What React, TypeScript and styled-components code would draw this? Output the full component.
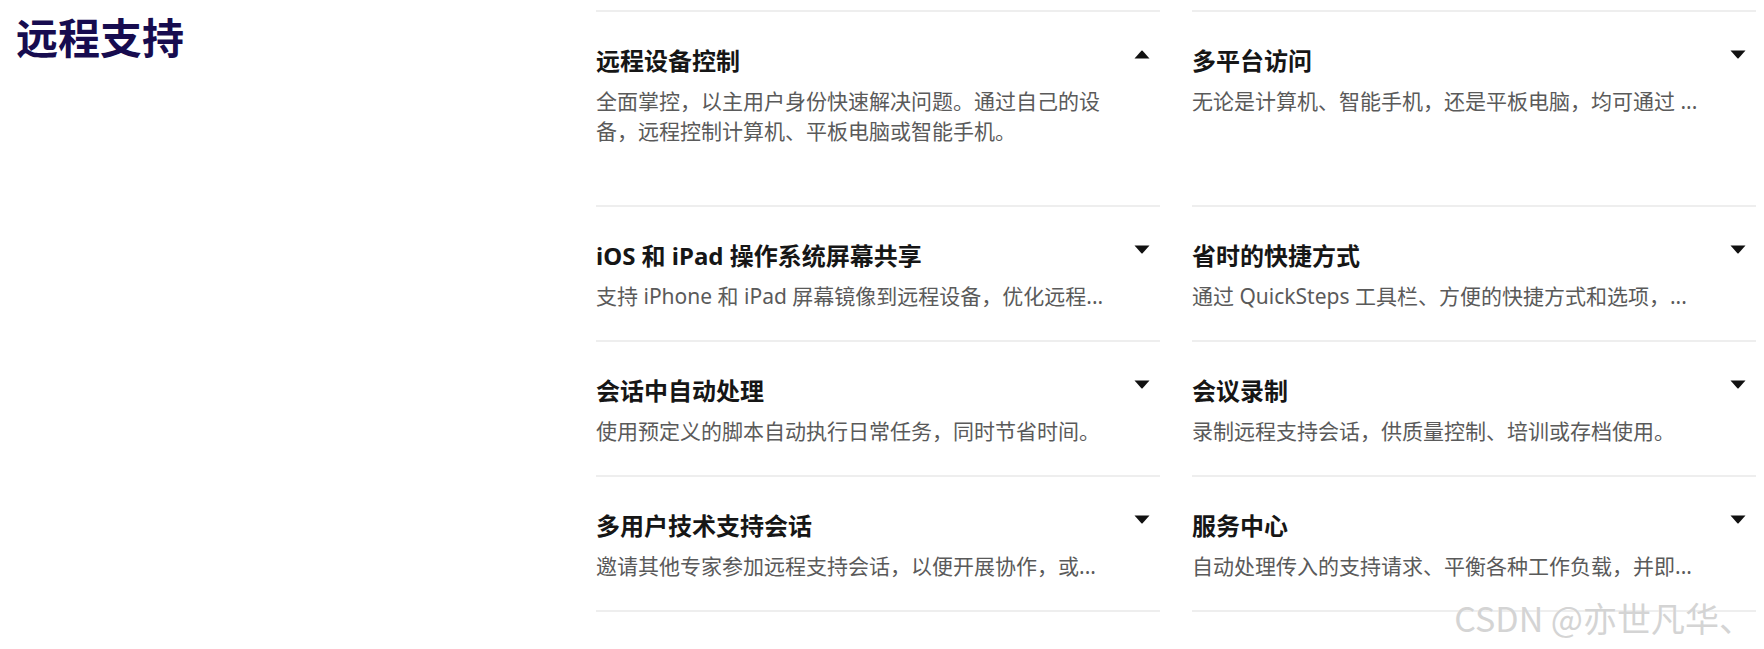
import React from 'react';
import styled, { createGlobalStyle } from 'styled-components';

const GlobalStyle = createGlobalStyle`
  body {
    margin: 0;
    background: #ffffff;
    font-family: 'Noto Sans', 'Noto Sans CJK SC', sans-serif;
  }
`;

type Feature = {
  title: string;
  desc: string;
  open?: boolean;
};

const features: Feature[] = [
  {
    title: '远程设备控制',
    desc: '全面掌控，以主用户身份快速解决问题。通过自己的设备，远程控制计算机、平板电脑或智能手机。',
    open: true,
  },
  { title: '多平台访问', desc: '无论是计算机、智能手机，还是平板电脑，均可通过 ...' },
  { title: 'iOS 和 iPad 操作系统屏幕共享', desc: '支持 iPhone 和 iPad 屏幕镜像到远程设备，优化远程...' },
  { title: '省时的快捷方式', desc: '通过 QuickSteps 工具栏、方便的快捷方式和选项，...' },
  { title: '会话中自动处理', desc: '使用预定义的脚本自动执行日常任务，同时节省时间。' },
  { title: '会议录制', desc: '录制远程支持会话，供质量控制、培训或存档使用。' },
  { title: '多用户技术支持会话', desc: '邀请其他专家参加远程支持会话，以便开展协作，或...' },
  { title: '服务中心', desc: '自动处理传入的支持请求、平衡各种工作负载，并即...' },
];

const Caret: React.FC<{ up?: boolean }> = ({ up }) => (
  <CaretIcon width="16" height="9" viewBox="0 0 16 9" $up={up}>
    <path d="M0.5 0.5 H15.5 L8.6 8.3 Q8 8.9 7.4 8.3 Z" fill="#111111" />
  </CaretIcon>
);

const FeatureItem: React.FC<{ item: Feature }> = ({ item }) => (
  <Item $open={item.open}>
    <ItemHeader>
      <ItemTitle>{item.title}</ItemTitle>
      <Caret up={item.open} />
    </ItemHeader>
    <ItemDesc>{item.desc}</ItemDesc>
  </Item>
);

const App: React.FC = () => {
  return (
    <>
      <GlobalStyle />
      <Page>
        <Aside>
          <Heading>远程支持</Heading>
        </Aside>
        <FeatureGrid>
          {features.map((item) => (
            <FeatureItem key={item.title} item={item} />
          ))}
        </FeatureGrid>
        <Watermark>CSDN @亦世凡华、</Watermark>
      </Page>
    </>
  );
};

const Page = styled.div`
  position: relative;
  min-height: 100vh;
  display: flex;
  align-items: flex-start;
  padding: 0 0 0 16px;
  box-sizing: border-box;
`;

const Aside = styled.div`
  width: 580px;
  flex-shrink: 0;
  padding-top: 12px;
`;

const Heading = styled.h2`
  margin: 0;
  font-size: 42px;
  line-height: 52px;
  font-weight: 700;
  color: #170c4f;
`;

const FeatureGrid = styled.div`
  display: grid;
  grid-template-columns: 564px 564px;
  column-gap: 32px;
  margin-top: 10px;
`;

const Item = styled.div<{ $open?: boolean }>`
  border-top: 2px solid #eeeeee;
  padding: 33px 0 ${(p) => (p.$open ? 59 : 29)}px;
  &:nth-last-child(-n + 2) {
    border-bottom: 2px solid #eeeeee;
  }
`;

const ItemHeader = styled.div`
  display: flex;
  justify-content: space-between;
  align-items: flex-start;
`;

const ItemTitle = styled.div`
  font-size: 24px;
  line-height: 32px;
  font-weight: 700;
  color: #161616;
`;

const CaretIcon = styled.svg<{ $up?: boolean }>`
  flex-shrink: 0;
  margin: 5px 10px 0 0;
  transform: ${(p) => (p.$up ? 'rotate(180deg)' : 'none')};
`;

const ItemDesc = styled.div`
  margin-top: 9px;
  padding-right: 48px;
  font-size: 21px;
  line-height: 30px;
  color: #5a5a5a;
`;

const Watermark = styled.div`
  position: absolute;
  right: 11px;
  bottom: 10px;
  font-family: 'Noto Sans CJK SC', sans-serif;
  font-size: 34px;
  line-height: 42px;
  font-weight: 400;
  color: #d4d4d4;
  text-shadow: 0 0 1px #ffffff;
  pointer-events: none;
`;

export default App;
